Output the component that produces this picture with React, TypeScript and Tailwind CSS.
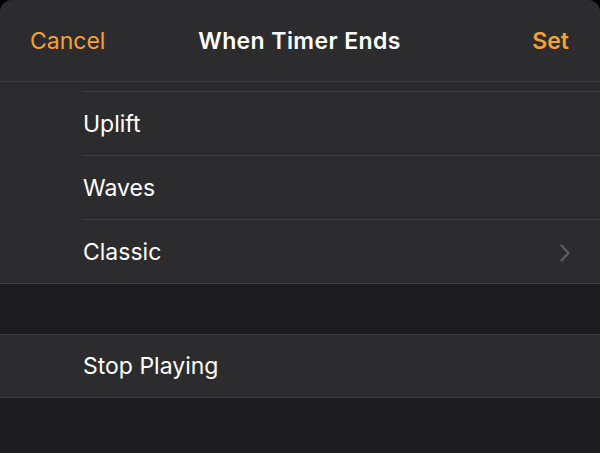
import React from 'react';

const Chevron = () => (
  <svg width="10" height="18" viewBox="0 0 10 18" fill="none" className="shrink-0">
    <path d="M1.5 1.5L8.5 9L1.5 16.5" stroke="#5c5c60" strokeWidth="2.4" strokeLinecap="round" strokeLinejoin="round" />
  </svg>
);

const App = () => {
  const sounds = ['Uplift', 'Waves', 'Classic'];

  return (
    <div className="w-[600px] h-[453px] bg-black overflow-hidden" style={{ fontFamily: 'Inter, "Noto Sans", sans-serif' }}>
      <div className="h-full rounded-t-[12px] bg-[#1c1c1e] overflow-hidden flex flex-col">
        {/* Header */}
        <div className="h-[82px] shrink-0 bg-[#2c2c2e] border-b border-[#3d3d40] grid grid-cols-[1fr_auto_1fr] items-center pl-[30px] pr-[31px] pt-[2px] text-[23px]">
          <span className="text-[#f4a234] justify-self-start">Cancel</span>
          <span className="text-white font-semibold tracking-[0.4px]">When Timer Ends</span>
          <span className="text-[#f4a234] font-semibold justify-self-end">Set</span>
        </div>

        {/* Sound list (scrolled) */}
        <div className="bg-[#2c2c2e] border-b border-[#3d3d40]">
          <div className="h-[10px] ml-[83px] border-b border-[#3d3d40]" />
          {sounds.map((name, i) => (
            <div
              key={name}
              className={`ml-[83px] pr-[30px] pt-[2px] flex items-center justify-between ${i < sounds.length - 1 ? 'h-[64px] border-b border-[#3d3d40]' : 'h-[63px]'}`}
            >
              <span className="text-white text-[23px]">{name}</span>
              {name === 'Classic' && <Chevron />}
            </div>
          ))}
        </div>

        <div className="h-[50px] shrink-0" />

        <div className="bg-[#2c2c2e] border-y border-[#3d3d40]">
          <div className="h-[62px] ml-[83px] pt-[1px] flex items-center">
            <span className="text-white text-[23px]">Stop Playing</span>
          </div>
        </div>
      </div>
    </div>
  );
};

export default App;
